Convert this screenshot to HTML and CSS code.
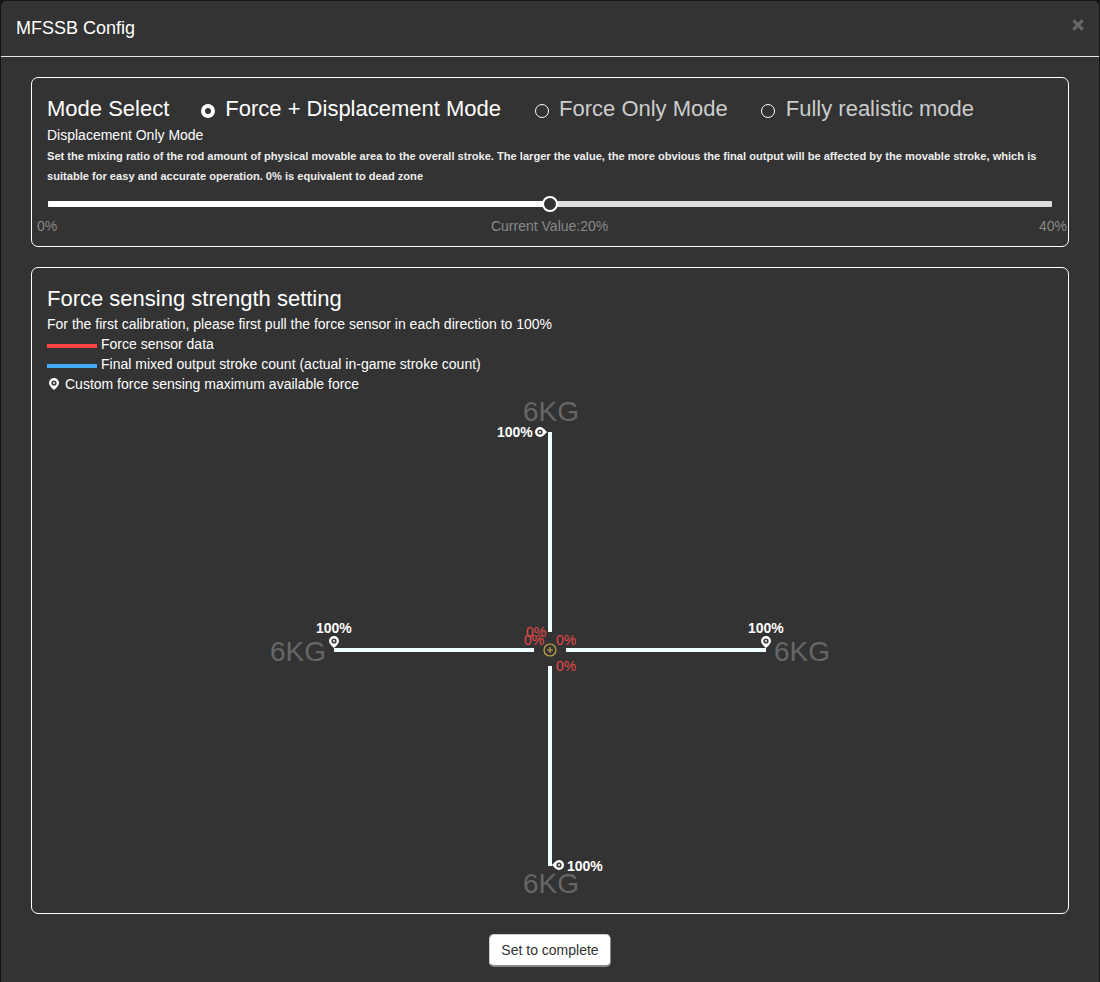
FILE: index.html
```html
<!DOCTYPE html>
<html lang="en">
<head>
<meta charset="utf-8">
<title>MFSSB Config</title>
<link rel="stylesheet" href="styles.css">
</head>
<body>
<svg class="defs" width="0" height="0" aria-hidden="true">
  <symbol id="pin" viewBox="0 0 10 12">
    <path fill-rule="evenodd" d="M5 0a5 5 0 0 0-5 5c0 3 5 7 5 7s5-4 5-7a5 5 0 0 0-5-5zm0 7.6a2.6 2.6 0 1 1 0-5.2 2.6 2.6 0 0 1 0 5.2z"/>
    <circle cx="5" cy="5" r="1.2" opacity="0.75"/>
  </symbol>
</svg>
<main class="modal">
  <header class="modal-header">
    <h1 class="modal-title">MFSSB Config</h1>
    <svg class="close" viewBox="0 0 12 12" aria-label="Close"><path d="M1 3l2-2 3 3 3-3 2 2-3 3 3 3-2 2-3-3-3 3-2-2 3-3z"/></svg>
  </header>
  <div class="modal-body">
    <section class="panel panel-mode">
      <div class="mode-row">
        <h2 class="panel-title">Mode Select</h2>
        <div class="radio-option radio-option-first is-on"><span class="radio"></span><span>Force + Displacement Mode</span></div>
        <div class="radio-option radio-option-second"><span class="radio"></span><span>Force Only Mode</span></div>
        <div class="radio-option radio-option-third"><span class="radio"></span><span>Fully realistic mode</span></div>
      </div>
      <div class="mode-extra">Displacement Only Mode</div>
      <p class="hint">Set the mixing ratio of the rod amount of physical movable area to the overall stroke. The larger the value, the more obvious the final output will be affected by the movable stroke, which is suitable for easy and accurate operation. 0% is equivalent to dead zone</p>
      <div class="slider"><span class="slider-fill"></span><span class="slider-thumb"></span></div>
      <div class="slider-labels"><span>0%</span><span class="slider-current">Current Value:20%</span><span>40%</span></div>
    </section>
    <section class="panel panel-force">
      <h2 class="panel-title">Force sensing strength setting</h2>
      <p class="line">For the first calibration, please first pull the force sensor in each direction to 100%</p>
      <div class="line legend"><span class="swatch swatch-red"></span>Force sensor data</div>
      <div class="line legend"><span class="swatch swatch-blue"></span>Final mixed output stroke count (actual in-game stroke count)</div>
      <div class="line legend legend-pin"><svg class="pin-small"><use href="#pin"/></svg>Custom force sensing maximum available force</div>
      <div class="cross">
        <span class="kg kg-top">6KG</span>
        <span class="kg kg-left">6KG</span>
        <span class="kg kg-right">6KG</span>
        <span class="kg kg-bottom">6KG</span>
        <span class="arm arm-top"></span>
        <span class="arm arm-bottom"></span>
        <span class="arm arm-left"></span>
        <span class="arm arm-right"></span>
        <svg class="pin pin-top"><use href="#pin"/></svg>
        <svg class="pin pin-left"><use href="#pin"/></svg>
        <svg class="pin pin-right"><use href="#pin"/></svg>
        <svg class="pin pin-bottom"><use href="#pin"/></svg>
        <span class="max max-top">100%</span>
        <span class="max max-left">100%</span>
        <span class="max max-right">100%</span>
        <span class="max max-bottom">100%</span>
        <span class="zero zero-top">0%</span>
        <span class="zero zero-left">0%</span>
        <span class="zero zero-right">0%</span>
        <span class="zero zero-bottom">0%</span>
        <svg class="center-mark" viewBox="0 0 14 14"><circle cx="7" cy="7" r="6" fill="none" stroke="#c9a548" stroke-width="1.2"/><path d="M7 4v6M4 7h6" stroke="#c9a548" stroke-width="1.2"/></svg>
      </div>
    </section>
    <div class="actions"><button class="btn" type="button">Set to complete</button></div>
  </div>
</main>
</body>
</html>
```
FILE: styles.css
```css
* { box-sizing: border-box; }
html, body { margin: 0; height: 100%; }
body {
  background: #141414;
  font-family: "Liberation Sans", Arial, sans-serif;
  color: #fff;
  font-size: 14px;
  line-height: 20px;
  overflow: hidden;
  padding: 1px 1px 0;
}
.defs { position: absolute; }
.modal {
  background: #333;
  border-radius: 5px 5px 0 0;
  height: 1000px;
}
.modal-header {
  height: 55px;
  border-bottom: 1px solid #e5e5e5;
  display: flex;
  justify-content: space-between;
  padding: 0 14px 0 15px;
  box-sizing: content-box;
}
.modal-title {
  margin: 0;
  font-size: 18px;
  font-weight: 400;
  line-height: 54px;
}
.close { width: 14px; height: 14px; margin: 17px 0 0; fill: #666; }
.modal-body { padding: 20px 30px 0; }
.panel {
  border: 1px solid #fff;
  border-radius: 7px;
  padding: 15px;
}
.panel-mode { height: 170px; padding-top: 15px; }
.panel-force { height: 647px; margin-top: 20px; padding-top: 15px; padding-bottom: 0; }
.panel-title {
  margin: 0;
  font-size: 22px;
  font-weight: 400;
  line-height: 31px;
  white-space: nowrap;
}
.mode-row { display: flex; align-items: center; height: 31px; }
.radio-option {
  display: flex;
  align-items: center;
  font-size: 22px;
  color: #ccc;
  white-space: nowrap;
}
.radio-option.is-on { color: #fff; }
.radio-option-first { margin-left: 32px; }
.radio-option-second { margin-left: 34px; }
.radio-option-third { margin-left: 33px; }
.radio {
  width: 14px;
  height: 14px;
  border-radius: 50%;
  border: 1px solid #fff;
  margin: 4px 10px 0 0;
  flex: none;
}
.radio-option-third .radio { margin-right: 11px; }
.is-on .radio { border: 4px solid #fff; background: #333; }
.mode-extra { height: 20px; margin-top: 1px; }
.hint {
  margin: 1px 0 0;
  font-size: 11.1px;
  font-weight: 700;
  line-height: 20px;
  color: #eee;
}
.slider {
  position: relative;
  height: 6px;
  background: #ddd;
  border-radius: 1px;
  margin: 15px 1px 0;
}
.slider-fill { position: absolute; inset: 0 50% 0 0; background: #fff; border-radius: 1px 0 0 1px; }
.slider-thumb {
  position: absolute;
  left: 50%;
  top: 50%;
  width: 16px;
  height: 16px;
  margin: -8px 0 0 -8px;
  border: 2px solid #fff;
  border-radius: 50%;
  background: #333;
}
.slider-labels {
  display: flex;
  justify-content: space-between;
  color: #888;
  margin: 9px -14px 0 -10px;
}
.slider-current { margin-left: 3px; }
.line { margin: 0; height: 20px; white-space: nowrap; }
.legend { display: flex; align-items: center; }
.swatch { width: 50px; height: 4px; margin: 3px 4px 0 0; }
.swatch-red { background: #f44; }
.swatch-blue { background: #4af; }
.pin-small { width: 10px; height: 12px; margin: 0 6px 0 2px; fill: #fff; }
.cross {
  position: relative;
  width: 600px;
  height: 518px;
  margin: 0 auto;
}
.kg {
  position: absolute;
  font-size: 28px;
  line-height: 32px;
  color: #666;
  white-space: nowrap;
}
.kg-top { left: 273px; top: 2px; }
.kg-left { left: 20px; top: 242px; }
.kg-right { left: 524px; top: 242px; }
.kg-bottom { left: 273px; top: 474px; }
.arm { position: absolute; background: #f0ffff; }
.arm-top { left: 298px; top: 38px; width: 4px; height: 200px; }
.arm-bottom { left: 298px; top: 272px; width: 4px; height: 200px; }
.arm-left { left: 84px; top: 254px; width: 200px; height: 4px; }
.arm-right { left: 316px; top: 254px; width: 200px; height: 4px; }
.pin { position: absolute; width: 10px; height: 12px; fill: #fff; }
.pin-top { left: 286px; top: 32px; transform: rotate(-90deg); }
.pin-left { left: 79px; top: 242px; }
.pin-right { left: 511px; top: 242px; }
.pin-bottom { left: 303px; top: 465px; transform: rotate(90deg); }
.max {
  position: absolute;
  font-size: 14px;
  font-weight: 700;
  line-height: 16px;
  white-space: nowrap;
}
.max-top { left: 247px; top: 30px; }
.max-left { left: 66px; top: 226px; }
.max-right { left: 498px; top: 226px; }
.max-bottom { left: 317px; top: 464px; }
.zero {
  position: absolute;
  font-size: 14px;
  line-height: 16px;
  color: #e44a4a;
}
.zero-top { left: 276px; top: 230px; }
.zero-left { left: 274px; top: 238px; }
.zero-right { left: 306px; top: 238px; }
.zero-bottom { left: 306px; top: 264px; }
.center-mark { position: absolute; left: 293px; top: 249px; width: 14px; height: 14px; }
.actions { display: flex; justify-content: center; margin-top: 20px; }
.btn {
  width: 122px;
  height: 33px;
  background: #fff;
  color: #333;
  border: 1px solid #ccc;
  border-right-color: #888;
  border-bottom: 2px solid #888;
  border-radius: 5px;
  font: 14px/20px "Liberation Sans", Arial, sans-serif;
  padding: 0;
}
```
